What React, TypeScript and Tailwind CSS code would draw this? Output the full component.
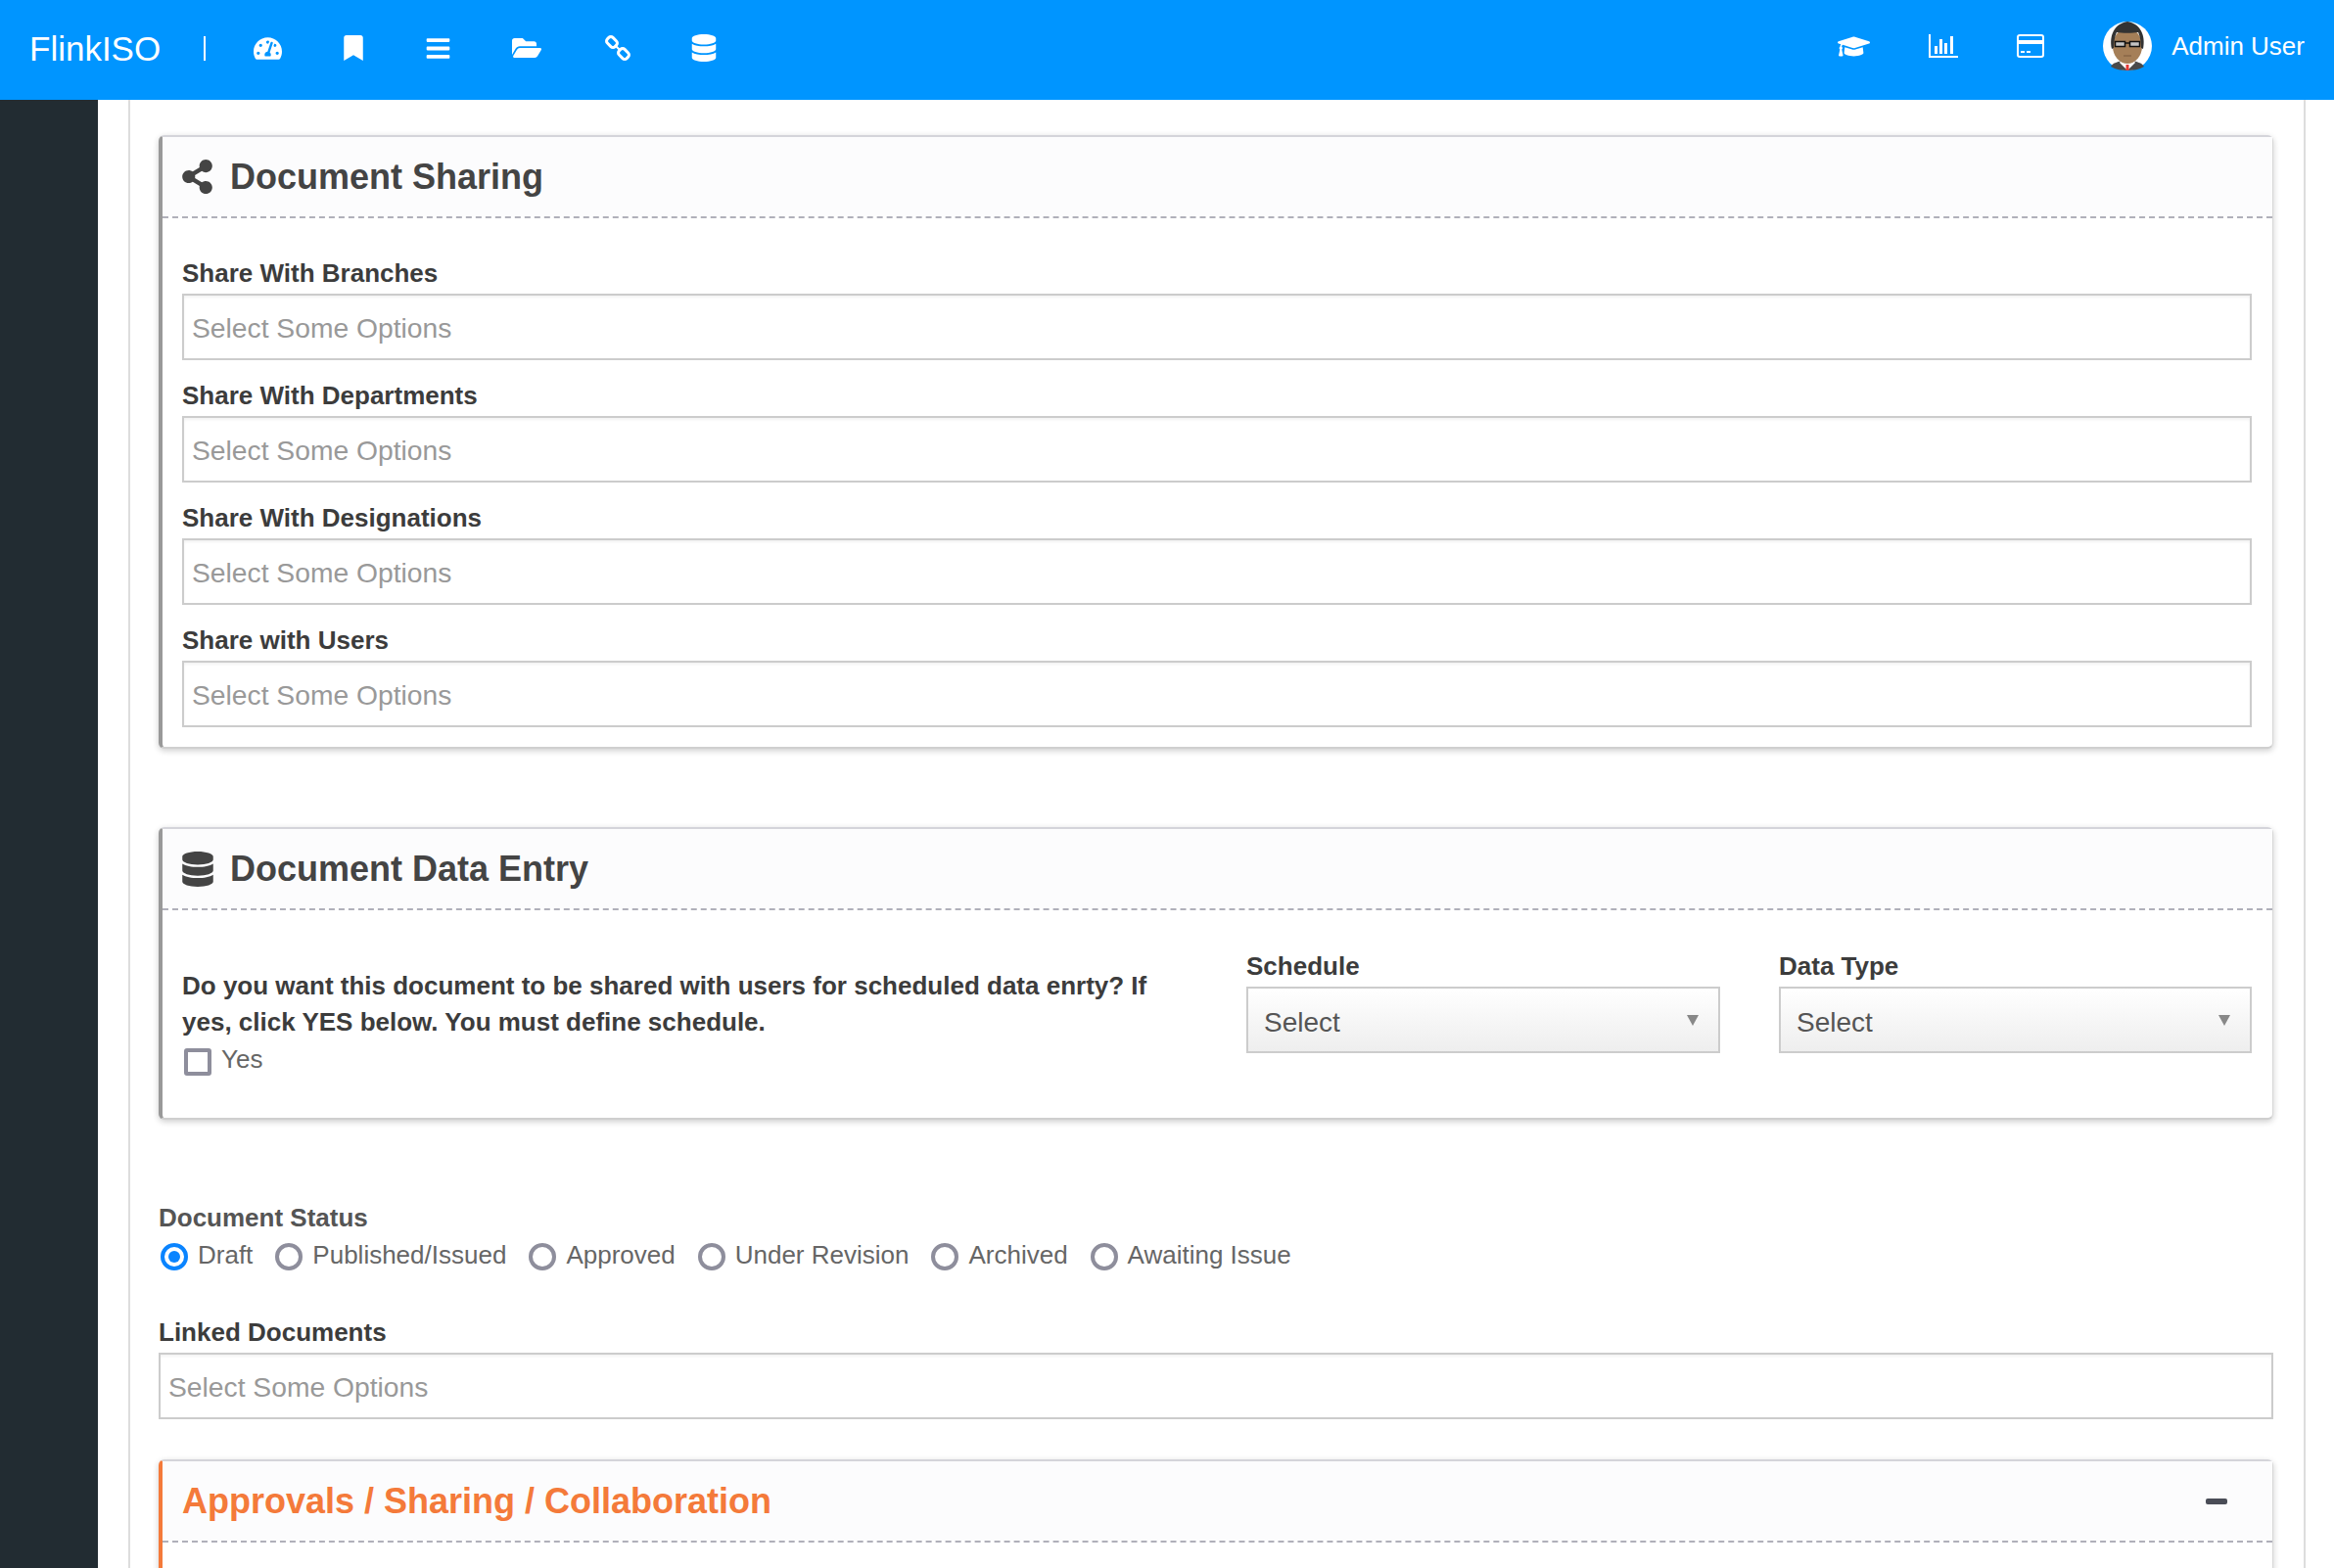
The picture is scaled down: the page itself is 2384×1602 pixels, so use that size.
import React from "react";
import { FaTachometerAlt, FaBookmark, FaBars, FaFolderOpen, FaDatabase, FaShareAlt, FaGraduationCap } from "react-icons/fa";

const ChainIcon = () => (
  <svg width="28" height="28" viewBox="0 0 28 28" className="ml-[64px]" fill="none" stroke="white" strokeWidth="3">
    <rect x="2.5" y="4" width="11" height="8" rx="3" transform="rotate(45 8 8)" />
    <rect x="14.5" y="16" width="11" height="8" rx="3" transform="rotate(45 20 20)" />
    <path d="M12 12l4 4" strokeWidth="2" />
  </svg>
);

const BarChartIcon = () => (
  <svg width="30" height="24" viewBox="0 0 30 24" fill="white">
    <path d="M0 0h2v22h28v2H0z" />
    <rect x="6" y="12" width="3" height="8" />
    <rect x="11" y="5" width="3" height="15" />
    <rect x="16" y="9" width="3" height="11" />
    <rect x="22" y="2" width="3" height="18" />
  </svg>
);

const CardIcon = () => (
  <svg width="28" height="24" viewBox="0 0 28 24" fill="none">
    <rect x="1" y="1" width="26" height="22" rx="2" stroke="white" strokeWidth="2" />
    <rect x="1" y="6" width="26" height="4" fill="white" />
    <rect x="4" y="17" width="4" height="2" fill="white" />
    <rect x="10" y="17" width="4" height="2" fill="white" />
  </svg>
);

const Avatar = () => (
  <svg width="50" height="50" viewBox="0 0 50 50" className="ml-[60px]">
    <circle cx="25" cy="25" r="25" fill="white" />
    <path d="M8 46c2-4 8-5 12-6h10c4 1 10 2 12 6-5 3-11 4-17 4s-12-1-17-4z" fill="#4a4a4a" />
    <path d="M19 39l6 4 6-4 2 3-8 8-8-8z" fill="white" />
    <rect x="23.5" y="44" width="3" height="6" fill="#e53935" />
    <ellipse cx="25" cy="25" rx="15" ry="18" fill="#a57f58" />
    <path d="M9 28C6 14 12 2 25 0c13 2 19 14 16 28l-2-1c0-5-1-12-3-16-5 1-17 1-22 0-2 4-3 11-3 16z" fill="#333333" />
    <rect x="12.5" y="20.5" width="10" height="5" fill="#c4c4c4" stroke="#111111" strokeWidth="1.5" />
    <rect x="27.5" y="20.5" width="10" height="5" fill="#c4c4c4" stroke="#111111" strokeWidth="1.5" />
    <path d="M22.5 22h5" stroke="#111111" strokeWidth="1.5" />
    <path d="M21 35h8" stroke="#7a5a3c" strokeWidth="1" />
  </svg>
);

const MultiSelect = () => (
  <div className="flex h-[68px] items-center border-2 border-[#cccccc] bg-white pl-[8px] pt-[3px] text-[28.25px] text-[#999999] shadow-[inset_0_2px_3px_rgba(0,0,0,0.05)]">
    Select Some Options
  </div>
);

const Field = ({ label }: { label: string }) => (
  <div className="mb-[18px] last:mb-0">
    <div className="mb-[3px] h-[36px] text-[26px] font-bold leading-[36px] text-[#3c3c3c]">{label}</div>
    <MultiSelect />
  </div>
);

const Dropdown = ({ label, className }: { label: string; className: string }) => (
  <div className={className}>
    <div className="mb-[3px] h-[36px] text-[26px] font-bold leading-[36px] text-[#3c3c3c]">{label}</div>
    <div className="flex h-[68px] items-center justify-between border-2 border-[#cccccc] bg-linear-to-b from-white to-[#eeeeee] pl-[16px] pr-[20px]">
      <span className="pt-[6px] text-[28px] text-[#555555]">Select</span>
      <span className="h-0 w-0 border-x-[6px] border-t-[11px] border-x-transparent border-t-[#888888]" />
    </div>
  </div>
);

const Card = ({ accent, title, icon, right, titleClass, children }: { accent: string; title: string; icon?: React.ReactNode; right?: React.ReactNode; titleClass: string; children?: React.ReactNode }) => (
  <div className={`rounded-[6px] border-t-2 border-r border-b-2 border-l-4 border-t-[#d4d4da] border-r-[#d8d8d8] border-b-[#cfcfcf] bg-white shadow-[0_2px_6px_rgba(0,0,0,0.2)] ${accent}`}>
    <div className="flex h-[81px] items-center justify-between bg-[#fcfcfd] pl-[20px] pr-[46px]">
      <div className="flex items-center">
        {icon}
        <h2 className={`text-[36px] font-bold ${titleClass}`}>{title}</h2>
      </div>
      {right}
    </div>
    <div className="border-t-2 border-dashed border-[#b0b0ba]">{children}</div>
  </div>
);

const Radio = ({ label, checked }: { label: string; checked?: boolean }) => (
  <div className="flex items-center">
    {checked ? (
      <span className="flex h-[28px] w-[28px] items-center justify-center rounded-full border-4 border-[#0a84ff]">
        <span className="h-[12px] w-[12px] rounded-full bg-[#0a84ff]" />
      </span>
    ) : (
      <span className="h-[28px] w-[28px] rounded-full border-4 border-[#8e8e9c]" />
    )}
    <span className="ml-[10px] pb-[4px] text-[26px] text-[#666666]">{label}</span>
  </div>
);

export default function App() {
  return (
    <div className="h-[1602px] w-[2384px] overflow-hidden bg-white font-['Liberation_Sans',Arial,sans-serif]">
      <header className="flex h-[102px] items-center bg-[#0095ff] pb-[4px] text-white">
        <div className="ml-[30px] w-[134px] text-[35px] leading-none">FlinkISO</div>
        <span className="ml-[44px] h-[25px] w-[2px] bg-white" />
        <FaTachometerAlt size={29} className="ml-[49px]" />
        <FaBookmark size={26} className="ml-[60px]" />
        <FaBars size={27} className="ml-[60px]" />
        <FaFolderOpen size={30} className="ml-[62px]" />
        <ChainIcon />
        <FaDatabase size={28} className="ml-[60px]" />
        <div className="ml-auto flex items-center pb-[4px] pr-[30px]">
          <FaGraduationCap size={33} />
          <div className="ml-[60px]"><BarChartIcon /></div>
          <div className="ml-[60px]"><CardIcon /></div>
          <Avatar />
          <div className="ml-[20px] text-[26px]">Admin User</div>
        </div>
      </header>
      <div className="flex h-[1500px]">
        <aside className="w-[100px] bg-[#222c32]" />
        <main className="ml-[31px] w-[2224px] border-x-2 border-[#dddddd] pl-[29px] pr-[31px] pt-[36px]">
          <Card
            accent="border-l-[#999999]"
            title="Document Sharing"
            titleClass="text-[#444444]"
            icon={<FaShareAlt size={35} className="-ml-[2px] mr-[16px] text-[#444444]" />}
          >
            <div className="pb-[20px] pl-[20px] pr-[21px] pt-[38px]">
              <Field label="Share With Branches" />
              <Field label="Share With Departments" />
              <Field label="Share With Designations" />
              <Field label="Share with Users" />
            </div>
          </Card>

          <div className="mt-[80px]">
            <Card
              accent="border-l-[#999999]"
              title="Document Data Entry"
              titleClass="text-[#444444]"
              icon={<FaDatabase size={36} className="-ml-[2px] mr-[15px] text-[#444444]" />}
            >
              <div className="flex h-[212px] pl-[20px]">
                <div className="w-[1087px] pt-[59px]">
                  <p className="w-[1040px] text-[26px] font-bold leading-[37px] text-[#3c3c3c]">
                    Do you want this document to be shared with users for scheduled data enrty? If yes, click YES below. You must define schedule.
                  </p>
                  <div className="flex items-center">
                    <span className="ml-[2px] h-[28px] w-[28px] rounded-[3px] border-4 border-[#8e8e9c]" />
                    <span className="ml-[10px] pb-[4px] text-[26px] text-[#666666]">Yes</span>
                  </div>
                </div>
                <Dropdown label="Schedule" className="w-[484px] pt-[39px]" />
                <Dropdown label="Data Type" className="ml-[60px] w-[483px] pt-[39px]" />
              </div>
            </Card>
          </div>

          <div className="mt-[82px] h-[36px] text-[26px] font-bold leading-[36px] text-[#555555]">Document Status</div>
          <div className="mt-[4px] flex h-[36px] items-center gap-[23px] pl-[2px]">
            <Radio label="Draft" checked />
            <Radio label="Published/Issued" />
            <Radio label="Approved" />
            <Radio label="Under Revision" />
            <Radio label="Archived" />
            <Radio label="Awaiting Issue" />
          </div>

          <div className="mb-[3px] mt-[41px] h-[36px] text-[26px] font-bold leading-[36px] text-[#3c3c3c]">Linked Documents</div>
          <MultiSelect />

          <div className="mt-[41px]">
            <Card
              accent="border-l-[#f47a3a]"
              title="Approvals / Sharing / Collaboration"
              titleClass="text-[#f47a3a]"
              right={<span className="h-[6px] w-[22px] rounded-[2px] bg-[#4a4d57]" />}
            >
              <div className="h-[100px]" />
            </Card>
          </div>
        </main>
      </div>
    </div>
  );
}
